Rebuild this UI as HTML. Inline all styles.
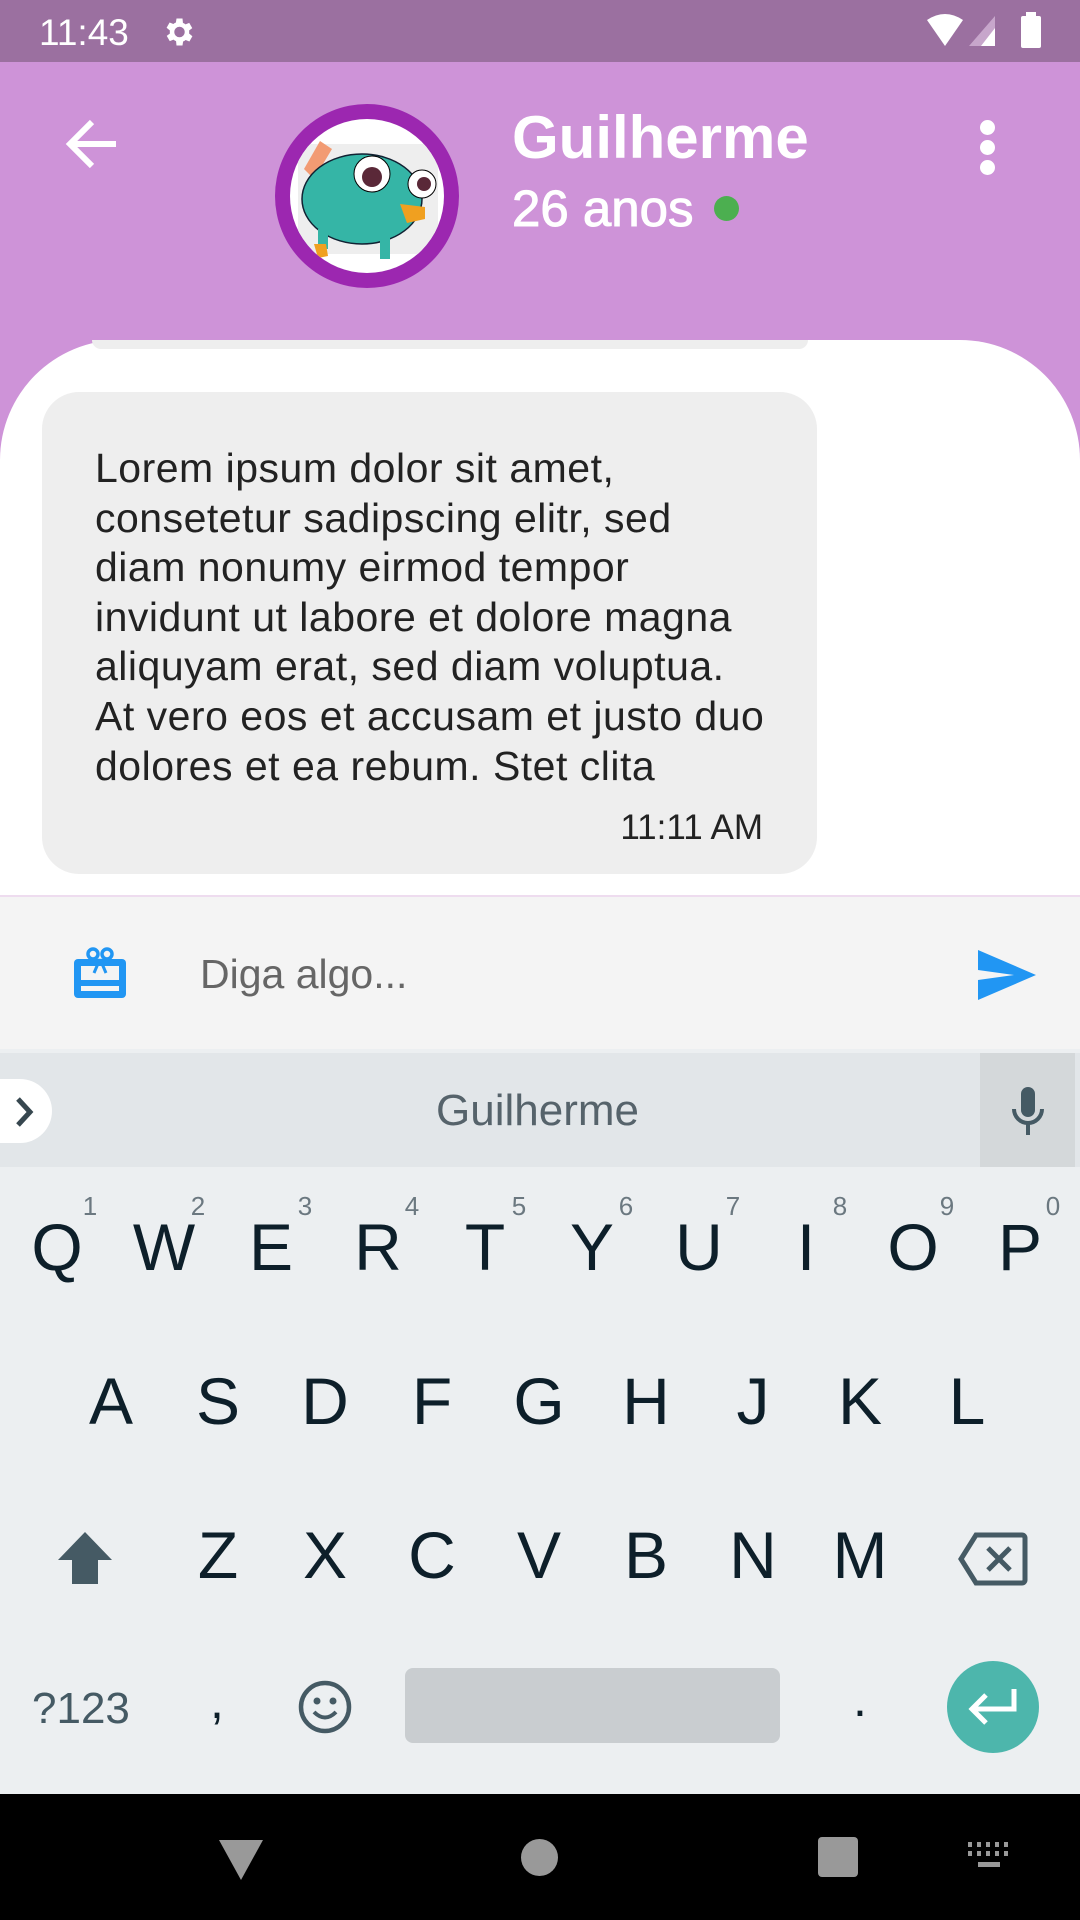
<!DOCTYPE html>
<html><head><meta charset="utf-8"><style>
*{margin:0;padding:0;box-sizing:border-box}
body{width:1080px;height:1920px;position:relative;overflow:hidden;font-family:"Liberation Sans",sans-serif;background:#ce93d8}
.a{position:absolute}
.k{position:absolute;font-size:66px;color:#0d1f2a;transform:translateX(-50%);line-height:1}
.n{position:absolute;font-size:26px;color:#6b7880;transform:translateX(-50%);line-height:1}
</style></head><body>
<div class="a" style="left:0;top:0;width:1080px;height:62px;background:#9b70a0"></div>
<div class="a" style="left:39px;top:12px;font-size:37px;color:#fff">11:43</div>
<svg class="a" style="left:160px;top:14px" width="36" height="36" viewBox="0 0 24 24"><path fill="#fff" d="M19.4 13a7.5 7.5 0 0 0 0-2l2.1-1.6-2-3.5-2.5 1a7 7 0 0 0-1.7-1L15 3h-4l-.4 2.7a7 7 0 0 0-1.7 1l-2.5-1-2 3.5L6.6 11a7.5 7.5 0 0 0 0 2l-2.1 1.6 2 3.5 2.5-1a7 7 0 0 0 1.7 1L11 21h4l.4-2.7a7 7 0 0 0 1.7-1l2.5 1 2-3.5zM13 15.5a3.5 3.5 0 1 1 0-7 3.5 3.5 0 0 1 0 7z"/></svg>
<svg class="a" style="left:925px;top:14px" width="100" height="34" viewBox="0 0 100 34"><path d="M2 6Q20-6 38 6L20 32z" fill="#fff"/><path d="M70 2V32H44z" fill="#c7a6cb"/><path d="M70 14V32H56z" fill="#fff"/></svg>
<div class="a" style="left:1021px;top:16px;width:20px;height:32px;background:#fff;border-radius:2px"></div>
<div class="a" style="left:1026px;top:12px;width:10px;height:5px;background:#fff"></div>
<svg class="a" style="left:64px;top:118px" width="56" height="52" viewBox="0 0 56 52"><path d="M52 26H8M28 4L6 26l22 22" stroke="#fff" stroke-width="6" fill="none"/></svg>
<div class="a" style="left:275px;top:104px;width:184px;height:184px;border-radius:50%;background:#9c27b0"></div>
<div class="a" style="left:290px;top:119px;width:154px;height:154px;border-radius:50%;background:#fff;overflow:hidden">
<svg width="154" height="154" viewBox="0 0 154 154"><rect x="8" y="25" width="140" height="110" fill="#eee"/><path d="M14 50L30 22l12 8-18 30z" fill="#f29b73"/><ellipse cx="72" cy="80" rx="60" ry="45" fill="#35b5a6" stroke="#123" stroke-width="1.5"/><rect x="28" y="110" width="10" height="20" fill="#35b5a6"/><rect x="90" y="115" width="10" height="25" fill="#35b5a6"/><path d="M24 125l12 0 2 12-10 2z" fill="#f0a020"/><circle cx="82" cy="55" r="18" fill="#fff" stroke="#000"/><circle cx="82" cy="58" r="10" fill="#5a2838"/><circle cx="132" cy="65" r="14" fill="#fff" stroke="#000"/><circle cx="134" cy="65" r="7" fill="#5a2838"/><path d="M110 85l25 3 0 12-18 4z" fill="#f0a020"/></svg></div>
<div class="a" style="left:512px;top:108px;font-size:60px;font-weight:bold;color:#fff;line-height:1">Guilherme</div>
<div class="a" style="left:512px;top:183px;font-size:51px;color:#fff;line-height:1;-webkit-text-stroke:1px #fff">26 anos</div>
<div class="a" style="left:714px;top:196px;width:25px;height:25px;border-radius:50%;background:#4caf50"></div>
<div class="a" style="left:980px;top:120px;width:15px;height:15px;border-radius:50%;background:#fff"></div>
<div class="a" style="left:980px;top:140px;width:15px;height:15px;border-radius:50%;background:#fff"></div>
<div class="a" style="left:980px;top:160px;width:15px;height:15px;border-radius:50%;background:#fff"></div>
<div class="a" style="left:0;top:340px;width:1080px;height:600px;background:#fff;border-radius:120px 120px 0 0"></div>
<div class="a" style="left:92px;top:340px;width:716px;height:9px;background:#eeeeee;border-radius:0 0 20px 20px"></div>
<div class="a" style="left:42px;top:392px;width:775px;height:482px;background:#eeeeee;border-radius:37px"></div>
<div class="a" style="left:95px;top:444px;font-size:41px;letter-spacing:0.5px;line-height:49.6px;color:#222;white-space:nowrap">Lorem ipsum dolor sit amet,<br>consetetur sadipscing elitr, sed<br>diam nonumy eirmod tempor<br>invidunt ut labore et dolore magna<br>aliquyam erat, sed diam voluptua.<br>At vero eos et accusam et justo duo<br>dolores et ea rebum. Stet clita</div>
<div class="a" style="right:317px;top:808px;font-size:35px;color:#222">11:11 AM</div>
<div class="a" style="left:0;top:895px;width:1080px;height:154px;background:#f4f4f4;border-top:2px solid #eedcef"></div>
<svg class="a" style="left:72px;top:946px" width="56" height="54" viewBox="0 0 56 54"><rect x="2" y="13" width="52" height="39" rx="4" fill="#2196f3"/><rect x="9" y="20" width="38" height="14" fill="#f4f4f4"/><rect x="9" y="40" width="38" height="5" fill="#f4f4f4"/><circle cx="21" cy="8" r="5" fill="none" stroke="#2196f3" stroke-width="3.5"/><circle cx="35" cy="8" r="5" fill="none" stroke="#2196f3" stroke-width="3.5"/><path d="M28 13l-6 14M28 13l6 14" stroke="#2196f3" stroke-width="3"/></svg>
<div class="a" style="left:200px;top:951px;font-size:41px;color:#666">Diga algo...</div>
<svg class="a" style="left:978px;top:950px" width="58" height="50" viewBox="0 0 58 50"><path d="M0 0L58 25 0 50V30l36-5L0 20z" fill="#2196f3"/></svg>
<div class="a" style="left:0;top:1049px;width:1080px;height:745px;background:#eceff1"></div>
<div class="a" style="left:0;top:1053px;width:1080px;height:114px;background:#e2e6e9"></div>
<div class="a" style="left:980px;top:1053px;width:95px;height:114px;background:#d4d8da"></div>
<div class="a" style="left:-30px;top:1079px;width:82px;height:64px;border-radius:32px;background:#fff"></div>
<svg class="a" style="left:13px;top:1095px" width="24" height="34" viewBox="0 0 24 34"><path d="M5 4l12 13L5 30" stroke="#37474f" stroke-width="5" fill="none"/></svg>
<div class="a" style="left:0;width:1075px;top:1086px;text-align:center;font-size:44px;color:#56636b">Guilherme</div>
<svg class="a" style="left:1010px;top:1087px" width="36" height="50" viewBox="0 0 36 50"><rect x="11" y="0" width="14" height="30" rx="7" fill="#455a64"/><path d="M4 22a14 14 0 0 0 28 0M18 36v12" stroke="#455a64" stroke-width="4" fill="none"/></svg>
<div class="k" style="left:57px;top:1214px">Q</div><div class="k" style="left:164px;top:1214px">W</div><div class="k" style="left:271px;top:1214px">E</div><div class="k" style="left:378px;top:1214px">R</div><div class="k" style="left:485px;top:1214px">T</div><div class="k" style="left:592px;top:1214px">Y</div><div class="k" style="left:699px;top:1214px">U</div><div class="k" style="left:806px;top:1214px">I</div><div class="k" style="left:913px;top:1214px">O</div><div class="k" style="left:1020px;top:1214px">P</div>
<div class="n" style="left:90px;top:1193px">1</div><div class="n" style="left:198px;top:1193px">2</div><div class="n" style="left:305px;top:1193px">3</div><div class="n" style="left:412px;top:1193px">4</div><div class="n" style="left:519px;top:1193px">5</div><div class="n" style="left:626px;top:1193px">6</div><div class="n" style="left:733px;top:1193px">7</div><div class="n" style="left:840px;top:1193px">8</div><div class="n" style="left:947px;top:1193px">9</div><div class="n" style="left:1053px;top:1193px">0</div>
<div class="k" style="left:111px;top:1368px">A</div><div class="k" style="left:218px;top:1368px">S</div><div class="k" style="left:325px;top:1368px">D</div><div class="k" style="left:432px;top:1368px">F</div><div class="k" style="left:539px;top:1368px">G</div><div class="k" style="left:646px;top:1368px">H</div><div class="k" style="left:753px;top:1368px">J</div><div class="k" style="left:860px;top:1368px">K</div><div class="k" style="left:967px;top:1368px">L</div>
<div class="k" style="left:218px;top:1522px">Z</div><div class="k" style="left:325px;top:1522px">X</div><div class="k" style="left:432px;top:1522px">C</div><div class="k" style="left:539px;top:1522px">V</div><div class="k" style="left:646px;top:1522px">B</div><div class="k" style="left:753px;top:1522px">N</div><div class="k" style="left:860px;top:1522px">M</div>
<svg class="a" style="left:56px;top:1530px" width="58" height="56" viewBox="0 0 58 56"><path d="M29 2L56 30H42V54H16V30H2z" fill="#455a64"/></svg>
<svg class="a" style="left:958px;top:1532px" width="70" height="54" viewBox="0 0 70 54"><path d="M18 3H64a3 3 0 0 1 3 3V48a3 3 0 0 1-3 3H18L3 27z" fill="none" stroke="#455a64" stroke-width="5"/><path d="M30 16l22 22M52 16L30 38" stroke="#455a64" stroke-width="5"/></svg>
<div class="a" style="left:32px;top:1684px;font-size:44px;color:#455a64">?123</div>
<div class="a" style="left:210px;top:1672px;font-size:50px;color:#0d1f2a">,</div>
<svg class="a" style="left:297px;top:1679px" width="56" height="56" viewBox="0 0 56 56"><circle cx="28" cy="28" r="24" fill="none" stroke="#455a64" stroke-width="4.5"/><circle cx="20" cy="22" r="3.5" fill="#455a64"/><circle cx="36" cy="22" r="3.5" fill="#455a64"/><path d="M17 33q11 11 22 0" stroke="#455a64" stroke-width="4" fill="none"/></svg>
<div class="a" style="left:405px;top:1668px;width:375px;height:75px;background:#c9cdd0;border-radius:8px"></div>
<div class="a" style="left:853px;top:1670px;font-size:50px;color:#0d1f2a">.</div>
<div class="a" style="left:947px;top:1661px;width:92px;height:92px;border-radius:50%;background:#4db6ac"></div>
<svg class="a" style="left:966px;top:1685px" width="54" height="44" viewBox="0 0 54 44"><path d="M48 4V24H8M20 10L6 24l14 14" stroke="#fff" stroke-width="5" fill="none"/></svg>
<div class="a" style="left:0;top:1794px;width:1080px;height:126px;background:#000"></div>
<svg class="a" style="left:219px;top:1840px" width="44" height="40" viewBox="0 0 44 40"><path d="M0 0H44L22 40z" fill="#999"/></svg>
<div class="a" style="left:521px;top:1839px;width:37px;height:37px;border-radius:50%;background:#999"></div>
<div class="a" style="left:818px;top:1837px;width:40px;height:40px;border-radius:4px;background:#999"></div>
<svg class="a" style="left:968px;top:1842px" width="40" height="28" viewBox="0 0 40 28"><g fill="#999"><rect x="0" y="0" width="4" height="5"/><rect x="9" y="0" width="4" height="5"/><rect x="18" y="0" width="4" height="5"/><rect x="27" y="0" width="4" height="5"/><rect x="36" y="0" width="4" height="5"/><rect x="0" y="9" width="4" height="5"/><rect x="9" y="9" width="4" height="5"/><rect x="18" y="9" width="4" height="5"/><rect x="27" y="9" width="4" height="5"/><rect x="36" y="9" width="4" height="5"/><rect x="10" y="20" width="22" height="5"/></g></svg>
</body></html>
